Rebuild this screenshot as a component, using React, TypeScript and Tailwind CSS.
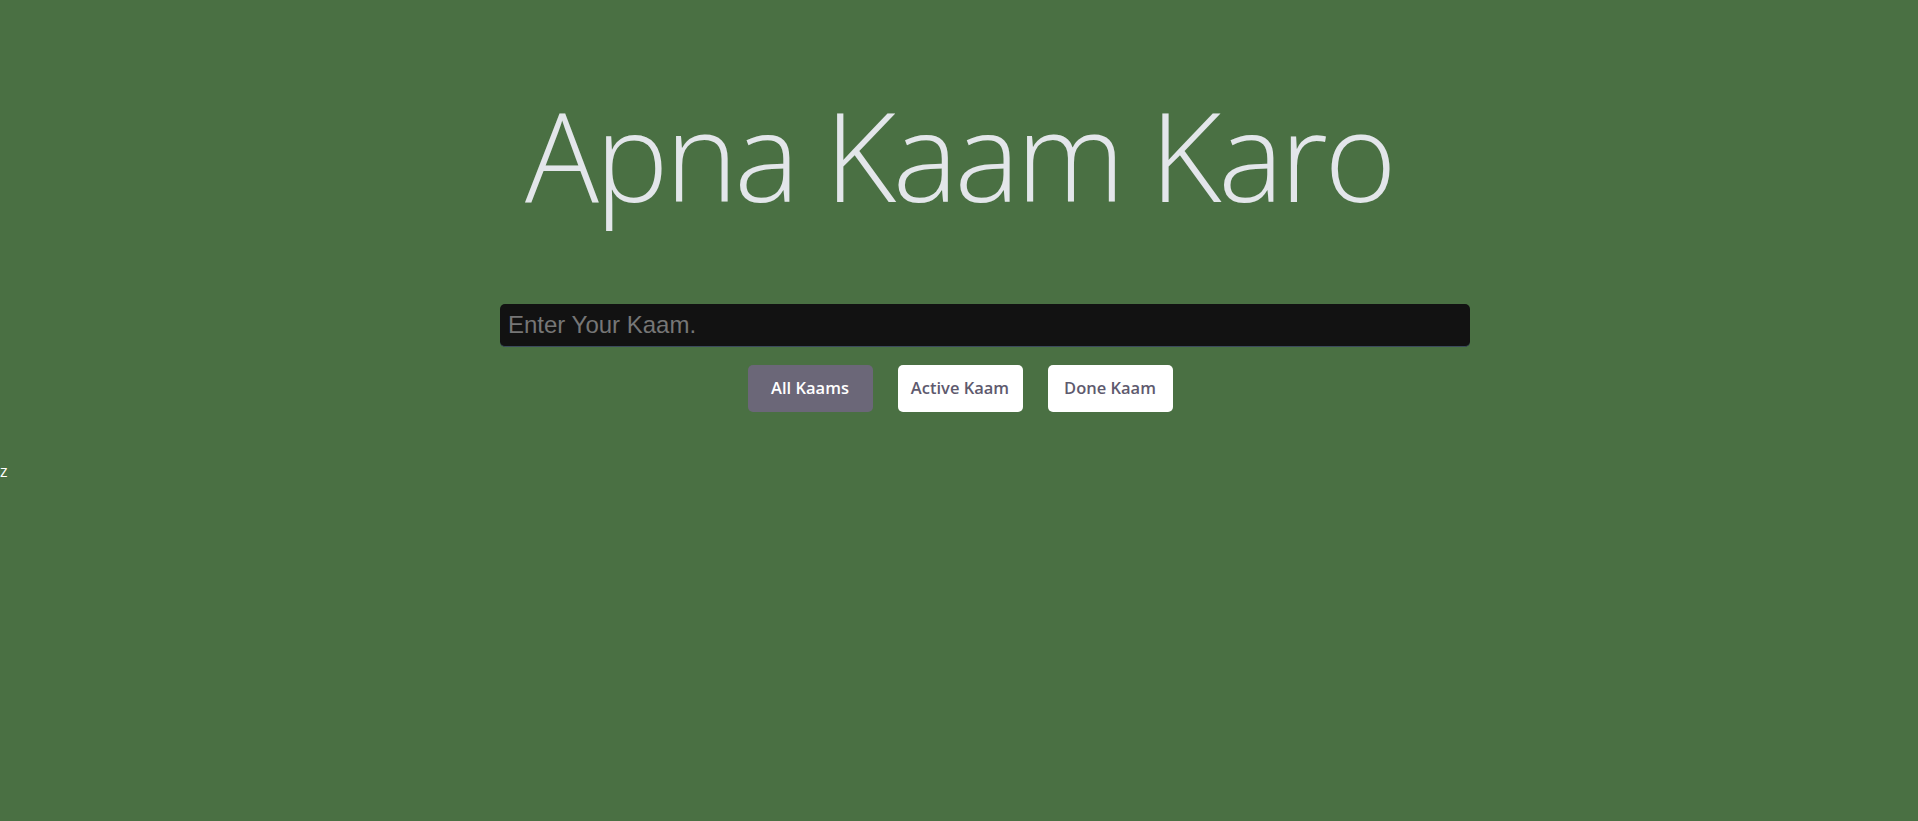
import React from "react";

export default function App() {
  return (
    <div className="min-h-[821px] w-full bg-[#4a7043] font-['Open_Sans',sans-serif]">
      <div className="flex flex-col items-center pt-[81px]">
        <h1 className="text-[123px] leading-[1.2] font-light text-[#e3e6ea] font-['Open_Sans',sans-serif] tracking-[-3.4px]">
          Apna Kaam Karo
        </h1>
      </div>
      <div className="mt-[75px] ml-[500px] w-[970px]">
        <input
          className="h-[43px] w-full rounded-[5px] border-b border-[#3b4b5c] bg-[#121212] px-[8px] text-[24px] font-['Liberation_Sans',Arial,sans-serif] text-[#d0d0d0] placeholder:text-[#767676] outline-none"
          placeholder="Enter Your Kaam."
        />
      </div>
      <div className="mt-[18px] flex justify-center gap-[25px] pl-[2px]">
        <button className="h-[47px] w-[125px] rounded-[5px] bg-[#6b6778] text-[16.5px] font-semibold text-white">
          All Kaams
        </button>
        <button className="h-[47px] w-[125px] rounded-[5px] bg-white text-[16.5px] font-semibold text-[#5e5a6e]">
          Active Kaam
        </button>
        <button className="h-[47px] w-[125px] rounded-[5px] bg-white text-[16.5px] font-semibold text-[#5e5a6e]">
          Done Kaam
        </button>
      </div>
      <div className="mt-[49px] text-[16px] leading-[20px] text-white font-['Open_Sans',sans-serif]">z</div>
    </div>
  );
}
